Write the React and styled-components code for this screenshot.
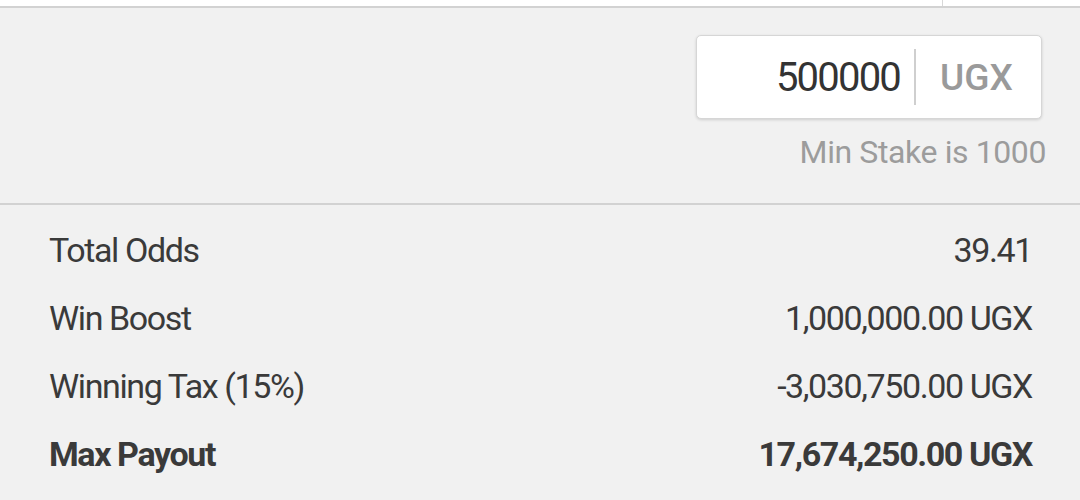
import React from 'react'
import styled, { createGlobalStyle } from 'styled-components'

const GlobalStyle = createGlobalStyle`
  html, body {
    margin: 0;
    padding: 0;
    background: #f1f1f1;
  }
  body {
    font-family: Roboto, 'Liberation Sans', sans-serif;
    width: 1080px;
    height: 500px;
    overflow: hidden;
  }
`

const TopStrip = styled.div`
  height: 6px;
  background: #fff;
  border-bottom: 2px solid #d2d2d2;
  display: flex;
  justify-content: flex-end;
  padding-right: 137px;
`

const TopTick = styled.span`
  width: 1px;
  height: 6px;
  background: #d8d8d8;
`

const StakeSection = styled.section`
  display: flex;
  flex-direction: column;
  align-items: flex-end;
  padding: 27px 34px 0 0;
  height: 197px;
  border-bottom: 2px solid #d2d2d2;
  box-sizing: border-box;
`

const StakeBox = styled.div`
  width: 346px;
  height: 84px;
  margin-right: 4px;
  display: flex;
  align-items: center;
  background: #fff;
  border: 1px solid #d6d6d6;
  border-radius: 5px;
  box-shadow: 0 1px 3px rgba(0, 0, 0, 0.15);
  box-sizing: border-box;
`

const StakeValue = styled.div`
  flex: 1;
  text-align: right;
  padding-right: 14px;
  font-size: 40px;
  color: #333;
  letter-spacing: -1.8px;
`

const Divider = styled.span`
  width: 2px;
  height: 56px;
  background: #cfcfcf;
`

const Currency = styled.div`
  width: 125px;
  padding-left: 24px;
  box-sizing: border-box;
  font-size: 37px;
  font-weight: 500;
  color: #9a9a9a;
`

const Hint = styled.div`
  margin-top: 14px;
  font-size: 32px;
  color: #9c9c9c;
  letter-spacing: -0.4px;
`

const Summary = styled.div`
  display: flex;
  flex-direction: column;
  padding: 11px 48px 0 49px;
`

const Row = styled.div`
  display: flex;
  justify-content: space-between;
  align-items: center;
  height: 68px;
  font-size: 34px;
  color: #3a3a3a;
  letter-spacing: -1.4px;
  font-weight: ${(p) => (p.bold ? 700 : 400)};
`

const rows = [
  { label: 'Total Odds', value: '39.41' },
  { label: 'Win Boost', value: '1,000,000.00 UGX' },
  { label: 'Winning Tax (15%)', value: '-3,030,750.00 UGX' },
  { label: 'Max Payout', value: '17,674,250.00 UGX', bold: true },
]

export default function App() {
  return (
    <>
      <GlobalStyle />
      <TopStrip>
        <TopTick />
      </TopStrip>
      <StakeSection>
        <StakeBox>
          <StakeValue>500000</StakeValue>
          <Divider />
          <Currency>UGX</Currency>
        </StakeBox>
        <Hint>Min Stake is 1000</Hint>
      </StakeSection>
      <Summary>
        {rows.map((r) => (
          <Row key={r.label} bold={r.bold}>
            <span>{r.label}</span>
            <span>{r.value}</span>
          </Row>
        ))}
      </Summary>
    </>
  )
}
